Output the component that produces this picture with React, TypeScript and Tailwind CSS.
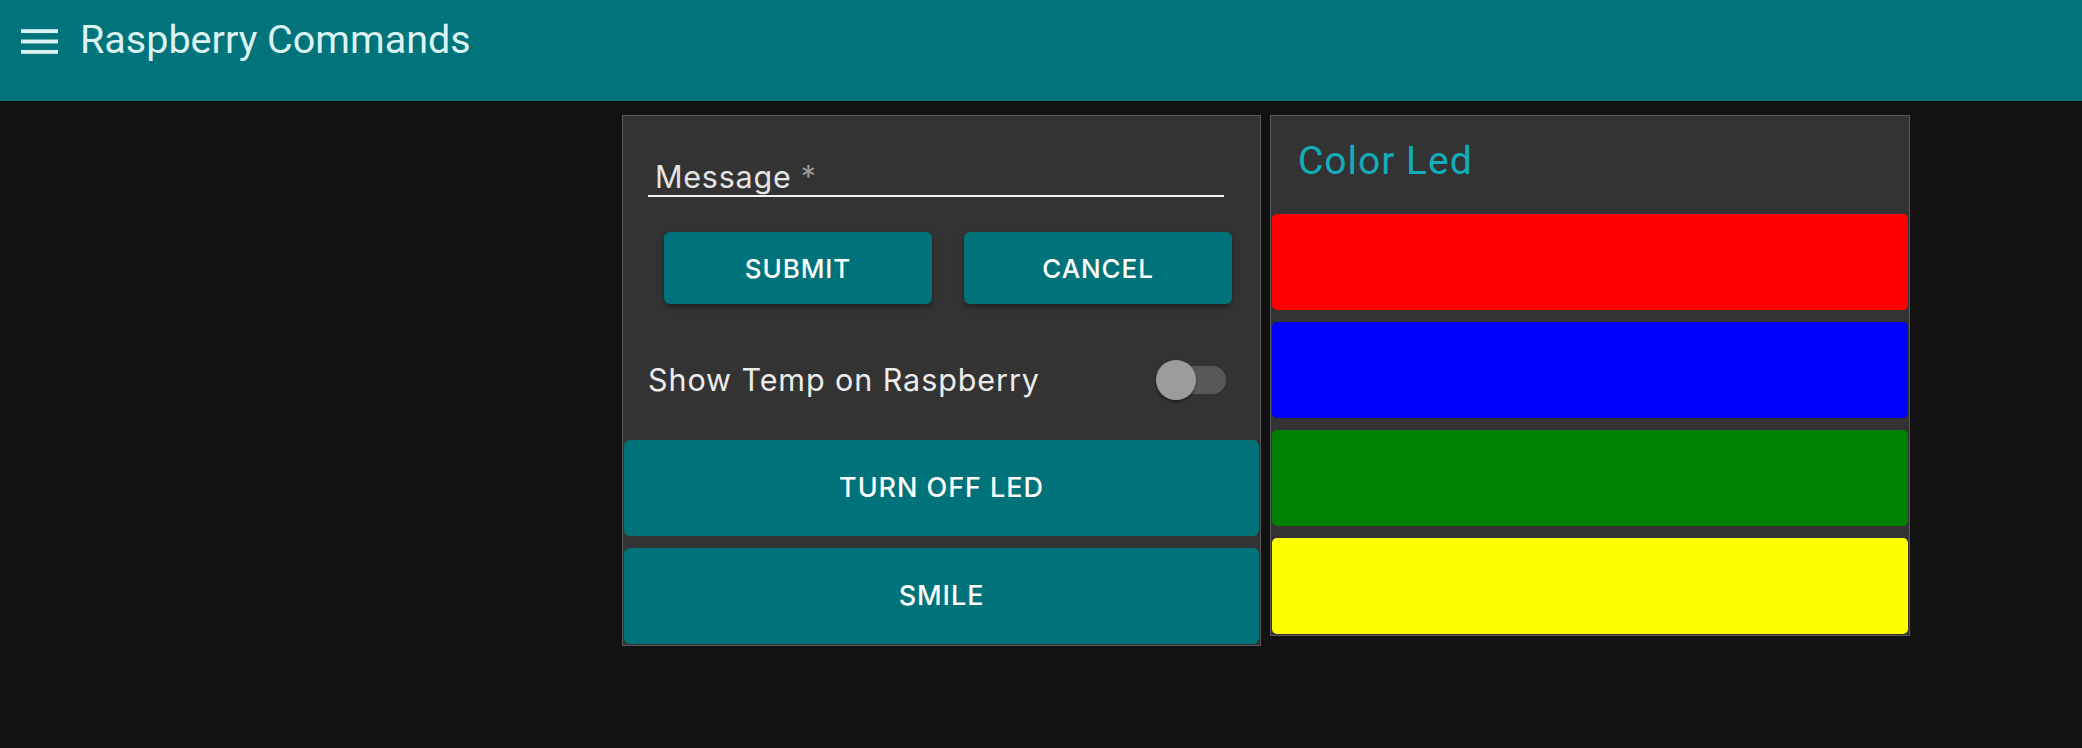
import React from "react";

const font = { fontFamily: "Roboto, 'Noto Sans', sans-serif" };
const inter = "font-['Inter','Noto_Sans',sans-serif]";

function MenuIcon() {
  return (
    <svg width="37" height="25" viewBox="0 0 18 12" className="block">
      <rect x="0" y="0" width="18" height="1.9" fill="#dcf3f3" />
      <rect x="0" y="5.05" width="18" height="1.9" fill="#dcf3f3" />
      <rect x="0" y="10.1" width="18" height="1.9" fill="#dcf3f3" />
    </svg>
  );
}

export default function App() {
  return (
    <div className="min-h-[748px] bg-[#121212]" style={font}>
      <header className="h-[101px] bg-[#00747a] flex items-start">
        <div className="ml-[21px] mt-[29px]">
          <MenuIcon />
        </div>
        <h1 className="ml-[22px] mt-[16px] text-[39.5px] leading-[47px] font-normal text-[#dcf3f3]">
          Raspberry Commands
        </h1>
      </header>

      <main className="flex items-start gap-[9px] pl-[622px] pt-[14px]">
        {/* Left panel */}
        <section className="w-[639px] border border-[#575757] bg-[#333333] flex flex-col pb-[1px]">
          <div className="ml-[25px] mt-[42px] w-[576px] border-b-2 border-[#f2f2f2]">
            <label className={`block pl-[7px] text-[30.5px] leading-[37px] tracking-[0.025em] text-[#e4e4e4] ${inter}`}>
              Message <span className="text-[#9a9a9a]">*</span>
            </label>
          </div>

          <div className={`ml-[41px] mt-[35px] flex gap-[32px] ${inter}`}>
            <button className="w-[268px] h-[72px] rounded-[6px] bg-[#00737a] text-white text-[26px] font-medium tracking-[0.035em] shadow-[0_3px_5px_rgba(0,0,0,0.35)]">
              SUBMIT
            </button>
            <button className="w-[268px] h-[72px] rounded-[6px] bg-[#00737a] text-white text-[26px] font-medium tracking-[0.035em] shadow-[0_3px_5px_rgba(0,0,0,0.35)]">
              CANCEL
            </button>
          </div>

          <div className="ml-[25px] mt-[48px] w-[578px] h-[56px] flex items-center justify-between">
            <span className={`text-[30.5px] tracking-[0.03em] text-[#ececec] ${inter}`}>Show Temp on Raspberry</span>
            <div className="relative w-[70px] h-[40px]">
              <div className="absolute left-[2px] right-0 top-[6px] h-[28px] rounded-full bg-[#585858]" />
              <div className="absolute left-0 top-0 w-[40px] h-[40px] rounded-full bg-[#9c9c9c] shadow-[0_2px_3px_rgba(0,0,0,0.4)]" />
            </div>
          </div>

          <button className={`mx-[1px] mt-[32px] h-[96px] rounded-[6px] bg-[#00737a] text-white text-[27px] font-medium tracking-[0.035em] ${inter}`}>
            TURN OFF LED
          </button>
          <button className={`mx-[1px] mt-[12px] h-[96px] rounded-[6px] bg-[#00737a] text-white text-[27px] font-medium tracking-[0.035em] ${inter}`}>
            SMILE
          </button>
        </section>

        {/* Right panel */}
        <section className="w-[640px] border border-[#575757] bg-[#333333] flex flex-col pb-[1px]">
          <h2 className="ml-[27px] mt-[22px] text-[39px] leading-[46px] tracking-[0.025em] font-normal text-[#11adbb]">
            Color Led
          </h2>
          <div className="mt-[30px] mx-[1px] flex flex-col gap-[12px]">
            <div className="h-[96px] rounded-[5px] bg-[#ff0000]" />
            <div className="h-[96px] rounded-[5px] bg-[#0000ff]" />
            <div className="h-[96px] rounded-[5px] bg-[#008000]" />
            <div className="h-[96px] rounded-[5px] bg-[#ffff00]" />
          </div>
        </section>
      </main>
    </div>
  );
}
